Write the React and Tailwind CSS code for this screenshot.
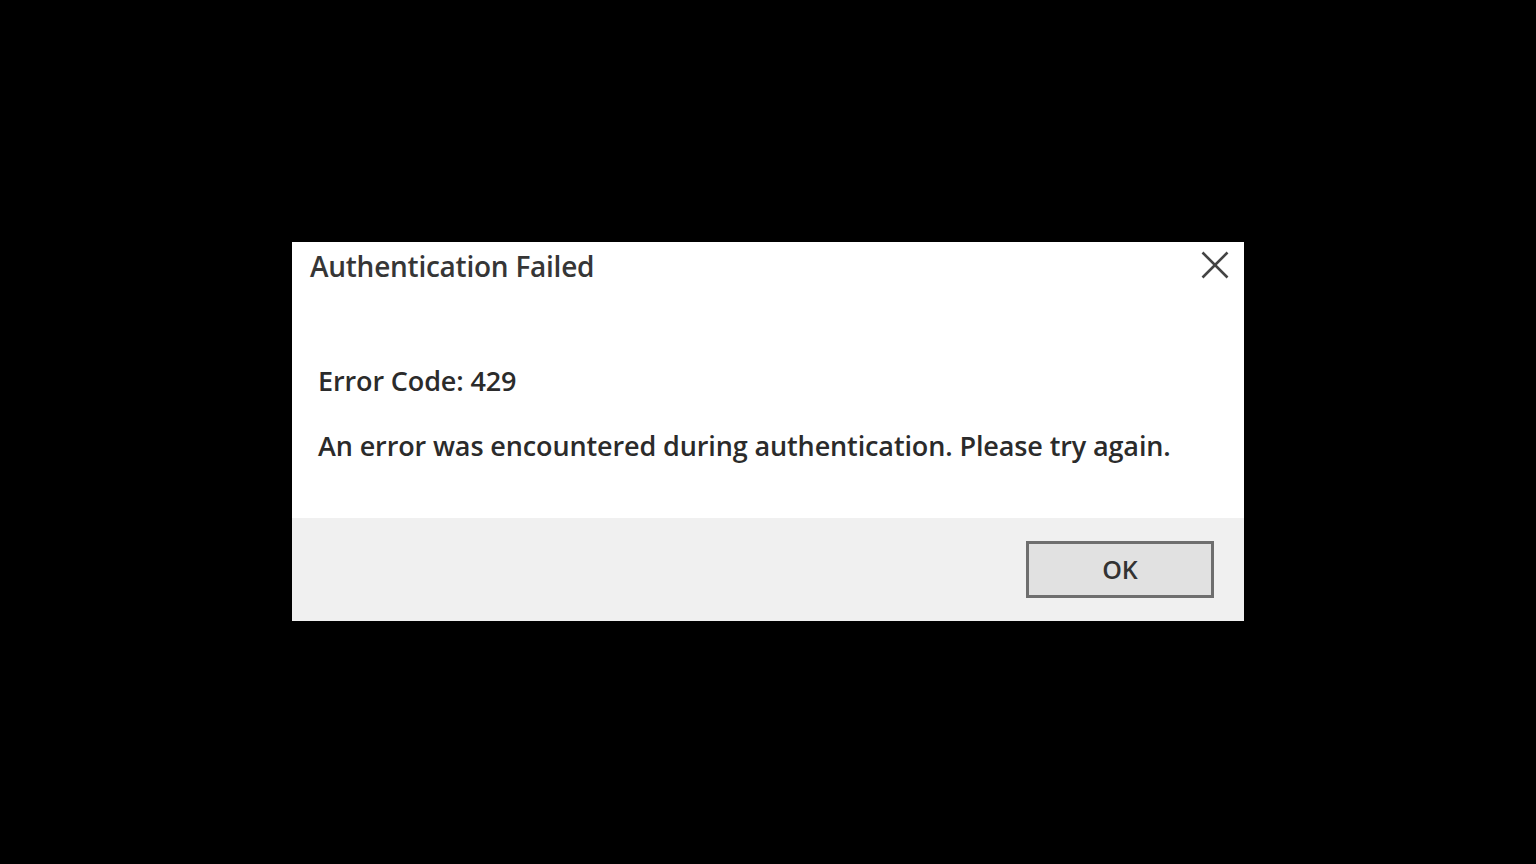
export default function App() {
  return (
    <div className="w-[1536px] h-[864px] bg-black flex items-start justify-center pt-[242px]">
      <div
        className="w-[952px] h-[379px] bg-white flex flex-col text-[#2b2b2b]"
        style={{ fontFamily: '"Open Sans", "Noto Sans", sans-serif' }}
      >
        <div className="h-[276px] flex flex-col">
          <div className="flex items-start justify-between pl-[18px] pr-[15px] pt-[3px]">
            <span className="text-[28px] font-semibold tracking-[-0.25px] text-[#363636]">Authentication Failed</span>
            <svg width="28" height="28" viewBox="0 0 28 28" className="mt-[6px]">
              <path d="M1.5 1.5L26.5 26.5M26.5 1.5L1.5 26.5" stroke="#444" strokeWidth="2.6" fill="none" />
            </svg>
          </div>
          <div className="pl-[26px] pt-[80px] flex flex-col gap-[38px] text-[27px] font-semibold tracking-[-0.12px] leading-none">
            <span>Error Code: 429</span>
            <span>An error was encountered during authentication. Please try again.</span>
          </div>
        </div>
        <div className="flex-1 bg-[#f0f0f0] flex items-start justify-end pr-[30px] pt-[23px]">
          <button className="w-[188px] h-[57px] border-[3px] border-[#6e6e6e] bg-[#e1e1e1] text-[25px] font-semibold text-[#333]">
            OK
          </button>
        </div>
      </div>
    </div>
  );
}
